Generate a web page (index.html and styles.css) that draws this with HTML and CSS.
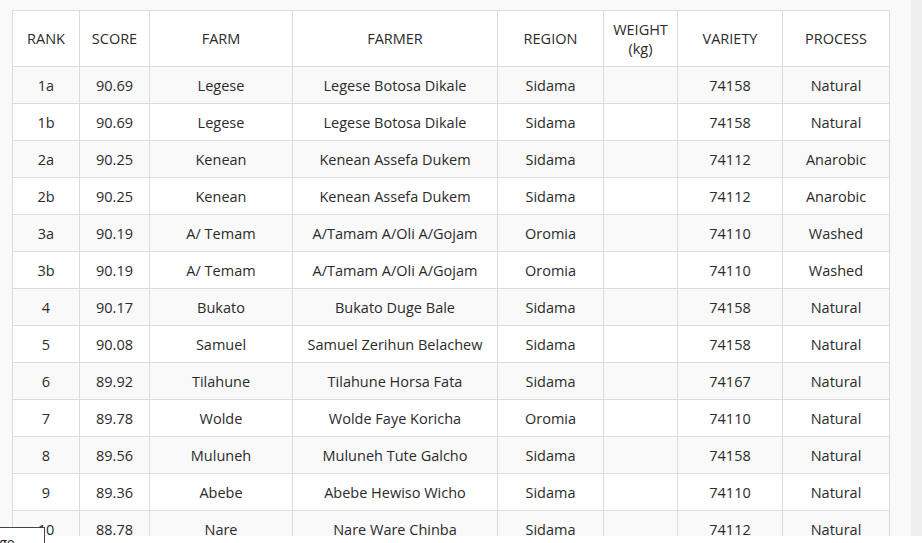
FILE: index.html
```html
<!DOCTYPE html>
<html>
<head>
<meta charset="utf-8">
<link rel="stylesheet" href="styles.css">
</head>
<body>
<div class="screen">
  <div class="viewport">
    <div class="content">
      <table class="results">
        <colgroup>
          <col class="c-rank"><col class="c-score"><col class="c-farm"><col class="c-farmer"><col class="c-region"><col class="c-weight"><col class="c-variety"><col class="c-process">
        </colgroup>
        <thead>
          <tr><th>RANK</th><th>SCORE</th><th>FARM</th><th>FARMER</th><th>REGION</th><th>WEIGHT<br>(kg)</th><th>VARIETY</th><th>PROCESS</th></tr>
        </thead>
        <tbody>
          <tr><td>1a</td><td>90.69</td><td>Legese</td><td>Legese Botosa Dikale</td><td>Sidama</td><td></td><td>74158</td><td>Natural</td></tr>
          <tr><td>1b</td><td>90.69</td><td>Legese</td><td>Legese Botosa Dikale</td><td>Sidama</td><td></td><td>74158</td><td>Natural</td></tr>
          <tr><td>2a</td><td>90.25</td><td>Kenean</td><td>Kenean Assefa Dukem</td><td>Sidama</td><td></td><td>74112</td><td>Anarobic</td></tr>
          <tr><td>2b</td><td>90.25</td><td>Kenean</td><td>Kenean Assefa Dukem</td><td>Sidama</td><td></td><td>74112</td><td>Anarobic</td></tr>
          <tr><td>3a</td><td>90.19</td><td>A/ Temam</td><td>A/Tamam A/Oli A/Gojam</td><td>Oromia</td><td></td><td>74110</td><td>Washed</td></tr>
          <tr><td>3b</td><td>90.19</td><td>A/ Temam</td><td>A/Tamam A/Oli A/Gojam</td><td>Oromia</td><td></td><td>74110</td><td>Washed</td></tr>
          <tr><td>4</td><td>90.17</td><td>Bukato</td><td>Bukato Duge Bale</td><td>Sidama</td><td></td><td>74158</td><td>Natural</td></tr>
          <tr><td>5</td><td>90.08</td><td>Samuel</td><td>Samuel Zerihun Belachew</td><td>Sidama</td><td></td><td>74158</td><td>Natural</td></tr>
          <tr><td>6</td><td>89.92</td><td>Tilahune</td><td>Tilahune Horsa Fata</td><td>Sidama</td><td></td><td>74167</td><td>Natural</td></tr>
          <tr><td>7</td><td>89.78</td><td>Wolde</td><td>Wolde Faye Koricha</td><td>Oromia</td><td></td><td>74110</td><td>Natural</td></tr>
          <tr><td>8</td><td>89.56</td><td>Muluneh</td><td>Muluneh Tute Galcho</td><td>Sidama</td><td></td><td>74158</td><td>Natural</td></tr>
          <tr><td>9</td><td>89.36</td><td>Abebe</td><td>Abebe Hewiso Wicho</td><td>Sidama</td><td></td><td>74110</td><td>Natural</td></tr>
          <tr><td>10</td><td>88.78</td><td>Nare</td><td>Nare Ware Chinba</td><td>Sidama</td><td></td><td>74112</td><td>Natural</td></tr>
        </tbody>
      </table>
    </div>
    <div class="scrollbar"></div>
  </div>
  <div class="statusbar"></div>
  <div class="pager-tip"><span class="pager-text">Page</span></div>
</div>
</body>
</html>
```

FILE: styles.css
```css
html, body {
  margin: 0;
  padding: 0;
}
body {
  width: 922px;
  height: 543px;
  overflow: hidden;
  font-family: "Open Sans", "DejaVu Sans", sans-serif;
  color: #2b2b2b;
  background: #fff;
}
.screen {
  position: relative;
  width: 922px;
  height: 543px;
  display: flex;
  flex-direction: column;
}
.viewport {
  height: 536px;
  display: flex;
  overflow: hidden;
}
.content {
  flex: 1;
  background: #f9f9f9;
  padding: 10px 0 0 12px;
  overflow: hidden;
}
.scrollbar {
  width: 11px;
  background: #efefef;
}
.statusbar {
  flex: 1;
  background: #fff;
}
.results {
  border-collapse: collapse;
  table-layout: fixed;
  width: 878px;
  background: #fff;
  font-size: 14.5px;
}
.c-rank { width: 67px; }
.c-score { width: 70px; }
.c-farm { width: 143px; }
.c-farmer { width: 205px; }
.c-region { width: 106px; }
.c-weight { width: 74px; }
.c-variety { width: 105px; }
.c-process { width: 107px; }
.results th,
.results td {
  border: 1px solid #dcdcdc;
  text-align: center;
  padding: 0 4px;
  font-weight: 400;
  line-height: 19px;
  white-space: nowrap;
  color: #2b2b2b;
}
.results th {
  height: 55px;
}
.results td {
  height: 36px;
}
.results tbody tr:nth-child(odd) td {
  background: #f9f9f9;
}
.results tbody tr:nth-child(even) td {
  background: #fff;
}
.pager-tip {
  position: absolute;
  left: 0;
  top: 527px;
  width: 44px;
  height: 20px;
  background: #fff;
  border-top: 1px solid #444;
  border-right: 1px solid #444;
  overflow: hidden;
  font-size: 14px;
  line-height: 20px;
}
.pager-text {
  display: block;
  margin-left: -17px;
  margin-top: 5px;
  color: #222;
}
```
